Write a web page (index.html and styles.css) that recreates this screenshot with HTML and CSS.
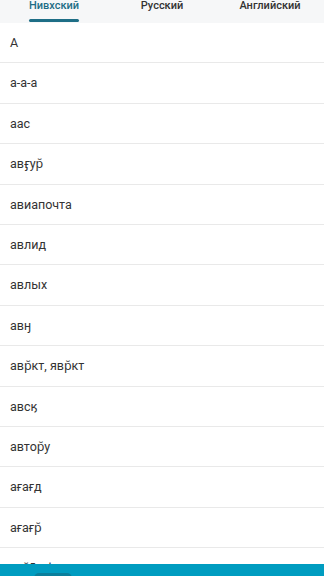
FILE: index.html
```html
<!DOCTYPE html>
<html lang="ru">
<head>
    <meta charset="UTF-8">
    <meta name="viewport" content="width=device-width, initial-scale=1.0">
    <title>Словарь</title>
    <link rel="stylesheet" href="styles.css">
</head>
<body>
    <div class="tabs">
        <div class="tab active"><span>Нивхский</span></div>
        <div class="tab"><span>Русский</span></div>
        <div class="tab"><span>Английский</span></div>
    </div>

    <ul class="words">
        <li>А</li>
        <li>а-а-а</li>
        <li>аас</li>
        <li>авӻур̆</li>
        <li>авиапочта</li>
        <li>авлид</li>
        <li>авлых</li>
        <li>авӈ</li>
        <li>авр̆кт, явр̆кт</li>
        <li>авсӄ</li>
        <li>автор̆у</li>
        <li>ағағд</li>
        <li>ағағр̆</li>
        <li>ағр̆ӯ афт</li>
    </ul>

    <div class="bottom-bar">
        <div class="pill"></div>
    </div>
</body>
</html>
```

FILE: styles.css
```css
body {
    margin: 0;
    font-family: Roboto, "Noto Sans", sans-serif;
    background: #fff;
    color: #333;
    overflow: hidden;
    height: 576px;
}
.tabs {
    display: flex;
    background: #f6f7f8;
    height: 23px;
}
.tab {
    flex: 1;
    display: flex;
    justify-content: center;
    font-size: 11px;
    font-weight: 500;
    color: #333;
}
.tab span {
    display: block;
    height: 20px;
    line-height: 12px;
    position: relative;
}
.tab.active { color: #1e6e86; }
.tab.active span::after {
    content: "";
    position: absolute;
    left: 0;
    right: 0;
    bottom: -2px;
    height: 3px;
    border-radius: 2px;
    background: #1e6e86;
}
.words {
    list-style: none;
    margin: 0;
    padding: 0;
}
.words li {
    height: 39.4px;
    line-height: 39.4px;
    padding-left: 10px;
    font-size: 12.5px;
    border-bottom: 1px solid #e9e9e9;
    white-space: nowrap;
}
.bottom-bar {
    position: fixed;
    left: 0;
    right: 0;
    bottom: 0;
    height: 12px;
    background: #009cc0;
}
.pill {
    position: absolute;
    left: 34px;
    top: 9px;
    width: 38px;
    height: 10px;
    border-radius: 5px;
    background: #0a7f9c;
}
```
